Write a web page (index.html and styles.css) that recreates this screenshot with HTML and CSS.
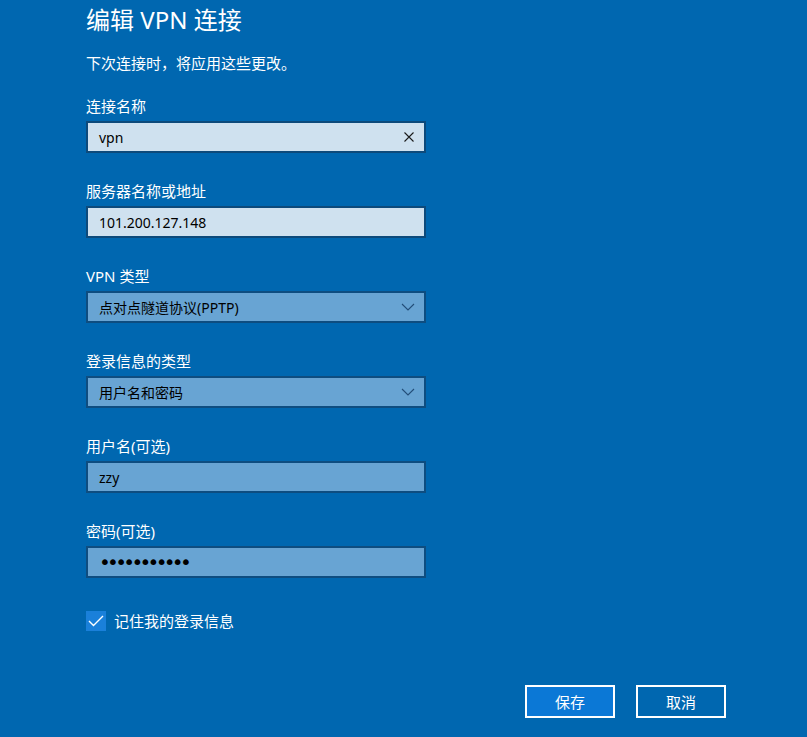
FILE: index.html
```html
<!DOCTYPE html>
<html lang="zh-CN">
<head>
  <meta charset="UTF-8">
  <meta name="viewport" content="width=device-width, initial-scale=1.0">
  <title>编辑 VPN 连接</title>
  <link rel="stylesheet" href="styles.css">
</head>
<body>
  <div class="vpn-dialog">
    <h1 class="dialog-title">编辑 VPN 连接</h1>
    <p class="dialog-note">下次连接时，将应用这些更改。</p>

    <div class="field">
      <label class="field-label">连接名称</label>
      <div class="text-box focused">
        <span class="box-value">vpn</span>
        <svg class="box-icon" width="12" height="12" viewBox="0 0 12 12">
          <path d="M1.5 1.5 L10.5 10.5 M10.5 1.5 L1.5 10.5" stroke="#1b1b1b" stroke-width="1.1" fill="none"/>
        </svg>
      </div>
    </div>

    <div class="field">
      <label class="field-label">服务器名称或地址</label>
      <div class="text-box focused">
        <span class="box-value">101.200.127.148</span>
      </div>
    </div>

    <div class="field">
      <label class="field-label">VPN 类型</label>
      <div class="text-box">
        <span class="box-value">点对点隧道协议(PPTP)</span>
        <svg class="box-icon" width="14" height="8" viewBox="0 0 14 8">
          <path d="M1 1 L7 7 L13 1" stroke="#234e78" stroke-width="1.1" fill="none"/>
        </svg>
      </div>
    </div>

    <div class="field">
      <label class="field-label">登录信息的类型</label>
      <div class="text-box">
        <span class="box-value">用户名和密码</span>
        <svg class="box-icon" width="14" height="8" viewBox="0 0 14 8">
          <path d="M1 1 L7 7 L13 1" stroke="#234e78" stroke-width="1.1" fill="none"/>
        </svg>
      </div>
    </div>

    <div class="field">
      <label class="field-label">用户名(可选)</label>
      <div class="text-box">
        <span class="box-value">zzy</span>
      </div>
    </div>

    <div class="field">
      <label class="field-label">密码(可选)</label>
      <div class="text-box">
        <span class="box-value password">•••••••••••</span>
      </div>
    </div>

    <div class="check-row">
      <span class="check-box">
        <svg width="16" height="12" viewBox="0 0 16 12">
          <path d="M1 6 L5.5 10.5 L15 1" stroke="#ffffff" stroke-width="1.4" fill="none"/>
        </svg>
      </span>
      <span class="check-label">记住我的登录信息</span>
    </div>

    <div class="dialog-buttons">
      <button class="dialog-btn primary">保存</button>
      <button class="dialog-btn">取消</button>
    </div>
  </div>
</body>
</html>
```

FILE: styles.css
```css
body {
  margin: 0;
  background-color: #0067b0;
  color: #ffffff;
  font-family: "Noto Sans", "Noto Sans CJK SC", sans-serif;
}

.vpn-dialog {
  width: 807px;
  height: 737px;
  padding: 4px 0 0 86px;
  box-sizing: border-box;
}

.dialog-title {
  margin: 0;
  font-size: 24px;
  font-weight: normal;
  line-height: 32px;
}

.dialog-note {
  margin: 17px 0 23px;
  font-size: 15px;
  line-height: 20px;
}

.field {
  width: 340px;
  margin-bottom: 28px;
}

.field-label {
  display: block;
  font-size: 15px;
  line-height: 20px;
  margin-bottom: 5px;
}

.text-box {
  display: flex;
  align-items: center;
  justify-content: space-between;
  height: 32px;
  box-sizing: border-box;
  padding: 0 9px 0 11px;
  border: 2px solid #0e4d80;
  background-color: #68a4d3;
  color: #000000;
  font-size: 14px;
}

.text-box.focused {
  background-color: #cfe1ef;
  border-color: #0d4a7b;
}

.box-value {
  white-space: nowrap;
}

.password {
  font-family: "DejaVu Sans", sans-serif;
  font-size: 20px;
  letter-spacing: -3.7px;
  line-height: 20px;
}

.check-row {
  display: flex;
  align-items: center;
  margin-top: 32px;
  font-size: 15px;
}

.check-box {
  display: flex;
  align-items: center;
  justify-content: center;
  width: 20px;
  height: 20px;
  background-color: #1a80da;
  margin-right: 8px;
}

.dialog-buttons {
  display: flex;
  justify-content: flex-end;
  gap: 21px;
  width: 640px;
  margin-top: 54px;
}

.dialog-btn {
  width: 90px;
  height: 33px;
  border: 2px solid #ffffff;
  background-color: #0067b0;
  color: #ffffff;
  font-family: "Noto Sans CJK SC", sans-serif;
  font-size: 15px;
  padding: 0;
}

.dialog-btn.primary {
  background-color: #0b78d6;
}
```
